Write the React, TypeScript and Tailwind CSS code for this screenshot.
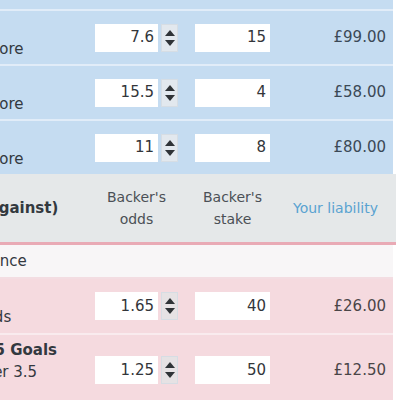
import React from "react";

const font = { fontFamily: '"DejaVu Sans", Verdana, sans-serif' };

function Spinner({ pink }: { pink?: boolean }) {
  return (
    <div
      className={`ml-[3px] flex h-[28px] w-[17px] flex-col items-center justify-center gap-[4px] border border-[#d6dde4] ${
        pink ? "bg-[#e6e2e4]" : "bg-[#e2e8ee]"
      }`}
    >
      <svg width="10" height="6" viewBox="0 0 10 6">
        <path d="M5 0 L10 6 L0 6 Z" fill="#2f3337" />
      </svg>
      <svg width="10" height="6" viewBox="0 0 10 6">
        <path d="M0 0 L10 0 L5 6 Z" fill="#2f3337" />
      </svg>
    </div>
  );
}

type Row = {
  title: string;
  market: string;
  odds: string;
  stake: string;
  liability: string;
};

function BetRow({
  row,
  pink,
  className,
  labelClass = "",
}: {
  row: Row;
  pink?: boolean;
  className: string;
  labelClass?: string;
}) {
  return (
    <div className={`flex items-center ${className}`}>
      <div
        className={`w-[179px] shrink-0 pl-[6px] pr-[28px] text-[15px] leading-[22px] text-[#33393f] ${labelClass}`}
      >
        <div className="font-bold">{row.title}</div>
        <div>{row.market}</div>
      </div>
      <div className="flex h-[28px] w-[63px] items-center justify-end bg-white pr-[4px] text-[15px] text-[#33363a]">
        {row.odds}
      </div>
      <Spinner pink={pink} />
      <div className="ml-[17px] flex h-[28px] w-[75px] items-center justify-end bg-white pr-[4px] text-[15px] text-[#33363a]">
        {row.stake}
      </div>
      <div
        className={`flex-1 pr-[7px] text-right text-[15px] ${
          pink ? "text-[#4a4547]" : "text-[#3b4956]"
        }`}
      >
        {row.liability}
      </div>
    </div>
  );
}

const backRows: Row[] = [
  { title: "2 - 1", market: "Correct Score", odds: "7.6", stake: "15", liability: "£99.00" },
  { title: "1 - 1", market: "Correct Score", odds: "15.5", stake: "4", liability: "£58.00" },
  { title: "2 - 0", market: "Correct Score", odds: "11", stake: "8", liability: "£80.00" },
];

export default function App() {
  return (
    <div className="h-[400px] w-[400px] overflow-hidden bg-white" style={font}>
      <div className="-ml-[84px] w-[477px]">
        {/* Blue back section */}
        <div className="bg-[#c5dcf1]">
          <div className="h-[9px]" />
          {backRows.map((r, i) => (
            <BetRow
              key={i}
              row={r}
              className="h-[55px] border-t-2 border-[#e1ecf8] bg-[#c5dcf1]"
            />
          ))}
        </div>

        {/* Lay header */}
        <div className="flex h-[71px] w-[480px] items-center border-b-[3px] border-[#e9aab5] bg-[#e5e8e9] text-[14px] leading-[22px] text-[#4b5056]">
          <div className="-ml-[4px] w-[183px] shrink-0 text-[15px] font-bold text-[#33393f]">
            <span className="whitespace-nowrap">Lay (Bet Against)</span>
          </div>
          <div className="w-[83px] text-center">
            Backer's
            <br />
            odds
          </div>
          <div className="ml-[17px] w-[75px] text-center">
            Backer's
            <br />
            stake
          </div>
          <div className="flex-1 pr-[18px] text-right text-[#5aa3d1]">Your liability</div>
        </div>

        {/* Market row */}
        <div className="flex h-[34px] items-center border-b-2 border-[#f3dde2] bg-[#f8f6f7] pl-[10px] text-[15px] text-[#33393f]">
          Italy v France
        </div>

        {/* Pink lay rows */}
        <div className="bg-[#f5dadf]">
          <BetRow
            row={{ title: "Draw", market: "Match Odds", odds: "1.65", stake: "40", liability: "£26.00" }}
            pink
            className="h-[54px]"
          />
          <BetRow
            row={{
              title: "Under 3.5 Goals",
              market: "Over/Under 3.5 Goals",
              odds: "1.25",
              stake: "50",
              liability: "£12.50",
            }}
            pink
            className="border-t-2 border-[#f9ebee]"
            labelClass="pt-[4px]"
          />
        </div>
      </div>
    </div>
  );
}
